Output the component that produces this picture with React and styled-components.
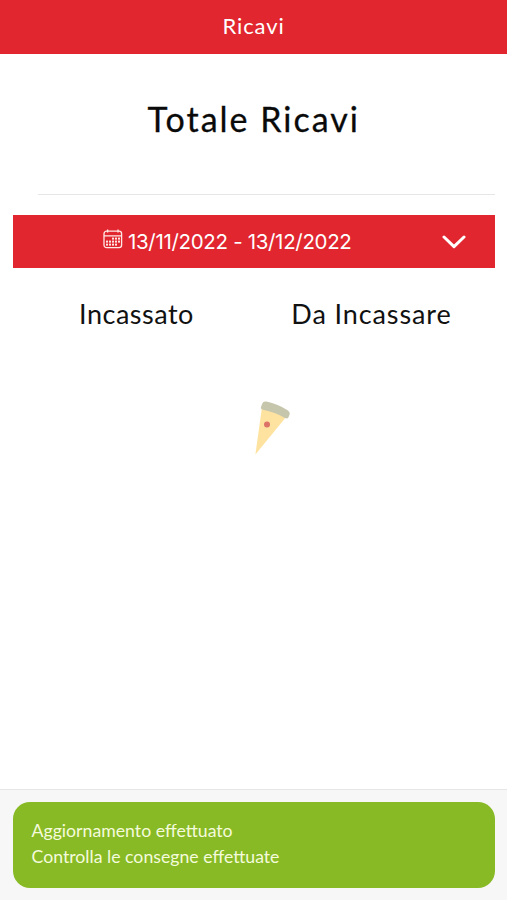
import React from "react";
import styled, { createGlobalStyle } from "styled-components";

const colors = {
  red: "#e12630",
  green: "#88ba25",
  footer: "#f7f7f7",
  line: "#e6e6e6",
};

const rows = [
  [9, 12, 15],
  [3, 6, 9, 12, 15],
  [3, 6, 9, 12],
];

const CalendarIcon = () => (
  <CalendarSvg viewBox="0 0 20 20">
    <rect x="1" y="2.2" width="17.6" height="16.4" rx="2.6" />
    <path d="M1 6.8H18.6M4.6 0.6V3.6M15 0.6V3.6" />
    {rows.map((row, i) =>
      row.map((x) => <rect key={`${i}-${x}`} className="day" x={x} y={8.6 + i * 3} width="2" height="2" />)
    )}
  </CalendarSvg>
);

const PizzaIcon = () => (
  <PizzaSvg viewBox="0 0 40 56">
    <path d="M12 8L36.5 17.5L5.4 55.6Z" fill="#fee3a0" />
    <path
      d="M12.2 4.8Q13.2 2 16.4 2.6Q28 5.2 38 11.4Q40.2 13 39.6 15.4L38.4 18.4Q37.4 20.2 35 19Q25 13.2 13 10.8Q10.4 10.2 11 8Z"
      fill="#c6c6ad"
    />
    <circle cx="17" cy="25.5" r="3" fill="#dc7268" />
  </PizzaSvg>
);

const App = () => {
  return (
    <>
      <GlobalStyle />
      <Wrapper>
        <Header>
          <HeaderTitle>Ricavi</HeaderTitle>
        </Header>
        <Main>
          <Title>Totale Ricavi</Title>
          <Divider />
          <DateButton type="button">
            <DateSection>
              <CalendarIcon />
              <DateText>13/11/2022 - 13/12/2022</DateText>
            </DateSection>
            <ChevronSvg viewBox="0 0 24 14">
              <path d="M2 2L12 11.6L22 2" />
            </ChevronSvg>
          </DateButton>
          <Columns>
            <Column $spacing="0.5px">Incassato</Column>
            <Column $spacing="0.9px">Da Incassare</Column>
          </Columns>
          <Loader>
            <PizzaIcon />
          </Loader>
        </Main>
        <Footer>
          <Toast>
            <ToastText>Aggiornamento effettuato</ToastText>
            <ToastText>Controlla le consegne effettuate</ToastText>
          </Toast>
        </Footer>
      </Wrapper>
    </>
  );
};

export default App;

const GlobalStyle = createGlobalStyle`
  * {
    box-sizing: border-box;
  }
  body {
    margin: 0;
    background-color: #ffffff;
    font-family: Lato, "Liberation Sans", sans-serif;
  }
  h1, h2, p {
    margin: 0;
    font-weight: 400;
  }
`;
const Wrapper = styled.div`
  display: flex;
  flex-direction: column;
  height: 100vh;
  overflow: hidden;
`;
const Header = styled.header`
  display: flex;
  justify-content: center;
  flex-shrink: 0;
  height: 54px;
  padding-top: 12px;
  background-color: ${colors.red};
`;
const HeaderTitle = styled.h2`
  font-size: 22px;
  line-height: 27px;
  letter-spacing: 0.9px;
  color: #ffffff;
`;
const Main = styled.main`
  display: flex;
  flex-direction: column;
  flex: 1;
  padding: 0 12.5px 0 13px;
`;
const Title = styled.h1`
  margin-top: 44px;
  font-size: 34px;
  line-height: 42px;
  letter-spacing: 2px;
  text-align: center;
  color: #0a0a0a;
  -webkit-text-stroke: 0.3px #0a0a0a;
`;
const Divider = styled.div`
  height: 1px;
  margin: 54px 0 20px 25px;
  background-color: ${colors.line};
`;
const DateButton = styled.button`
  display: flex;
  align-items: center;
  justify-content: space-between;
  height: 53px;
  padding: 0 28.5px 0 90px;
  border: none;
  background-color: ${colors.red};
  color: #ffffff;
`;
const DateSection = styled.div`
  display: flex;
  align-items: center;
  gap: 5px;
`;
const DateText = styled.span`
  font-family: Inter, sans-serif;
  font-size: 20.5px;
  line-height: 26px;
  letter-spacing: -0.32px;
  white-space: nowrap;
`;
const CalendarSvg = styled.svg`
  width: 20px;
  height: 20px;
  margin-bottom: 5px;
  fill: none;
  stroke: #ffe9e6;
  stroke-width: 1.3;
  .day {
    fill: #ffe9e6;
    stroke: none;
  }
`;
const ChevronSvg = styled.svg`
  width: 24px;
  height: 14px;
  fill: none;
  stroke: #ffffff;
  stroke-width: 3;
  stroke-linecap: round;
  stroke-linejoin: round;
`;
const Columns = styled.div`
  display: flex;
  margin-top: 29px;
  padding-left: 6px;
`;
const Column = styled.h2`
  width: 235px;
  font-size: 27px;
  line-height: 34px;
  letter-spacing: ${(props) => props.$spacing};
  text-align: center;
  color: #111111;
`;
const Loader = styled.div`
  display: flex;
  justify-content: center;
  margin-top: 68px;
  padding-left: 33px;
`;
const PizzaSvg = styled.svg`
  width: 40px;
  height: 56px;
`;
const Footer = styled.footer`
  flex-shrink: 0;
  height: 111px;
  padding: 12px 12px 12px 13px;
  border-top: 1px solid ${colors.line};
  background-color: ${colors.footer};
`;
const Toast = styled.div`
  height: 86px;
  padding: 16px 18.5px;
  border-radius: 17px;
  background-color: ${colors.green};
`;
const ToastText = styled.p`
  font-size: 17.7px;
  line-height: 26px;
  white-space: nowrap;
  color: #f4fbdc;
`;
